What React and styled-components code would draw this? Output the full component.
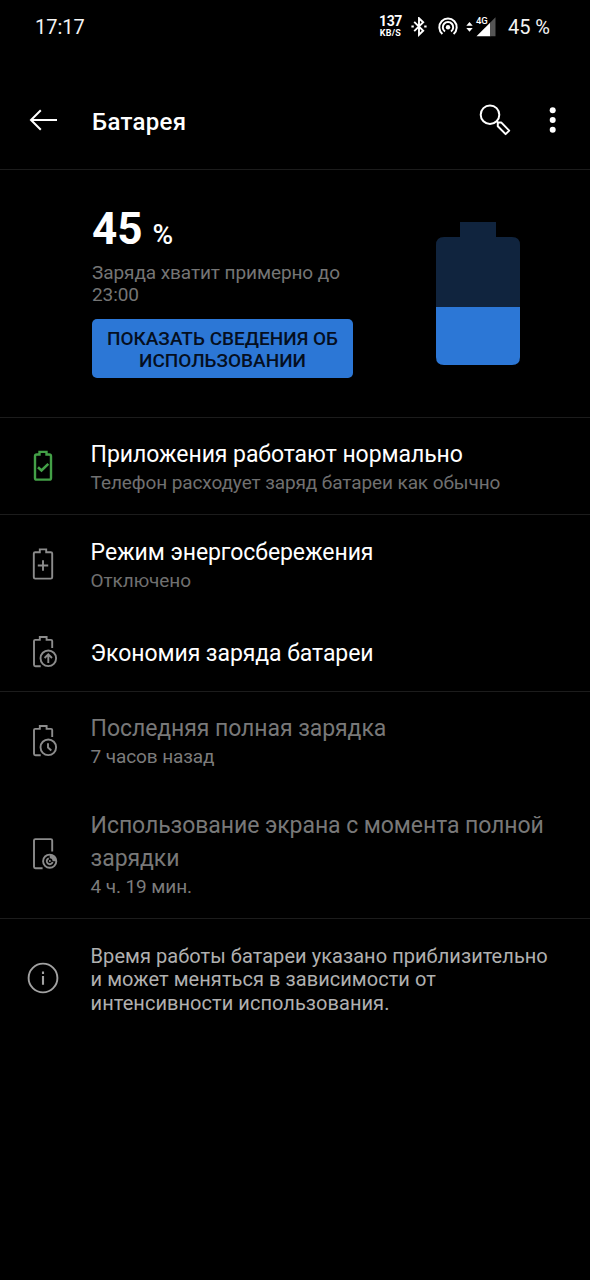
import React from "react";
import styled, { createGlobalStyle } from "styled-components";

const GlobalStyle = createGlobalStyle`
  * { box-sizing: border-box; }
  body { margin: 0; background: #000; font-family: Roboto, "Noto Sans", sans-serif; }
  svg { display: block; flex: none; }
`;

const Screen = styled.main`
  width: 590px;
  height: 1280px;
  background: #000;
  color: #fff;
  overflow: hidden;
`;

const StatusBar = styled.header`
  display: flex;
  align-items: center;
  height: 54px;
  padding: 0 40px 0 35px;
`;

const StatusText = styled.span`
  font-size: 20px;
  line-height: 24px;
  color: #f4f4f4;
  white-space: nowrap;
`;

const StatusIcons = styled.div`
  display: flex;
  align-items: center;
  margin-left: auto;
`;

const StatusGap = styled.div`
  margin-left: ${(p) => p.$size};
`;

const Speed = styled.div`
  width: 24px;
  margin-right: 9px;
  padding-bottom: 1px;
  text-align: center;
  font-weight: 700;
  white-space: nowrap;
`;

const SpeedValue = styled.div`
  font-size: 14px;
  line-height: 13px;
  letter-spacing: -0.5px;
`;

const SpeedUnit = styled.div`
  font-size: 9px;
  line-height: 10px;
  letter-spacing: 0.2px;
`;

const AppBar = styled.div`
  display: flex;
  align-items: center;
  height: 116px;
  padding: 17px 29px 0 29px;
  border-bottom: 1px solid #1c1c1c;
`;

const AppTitle = styled.h1`
  margin: 0 auto 0 34px;
  padding-top: 4px;
  font-size: 24px;
  line-height: 30px;
  font-weight: 500;
  letter-spacing: 0.3px;
`;

const IconButton = styled.button`
  display: flex;
  margin: 0 0 0 ${(p) => p.$gap || "0"};
  padding: 0;
  border: 0;
  background: none;
  color: #fff;
`;

const Summary = styled.section`
  display: flex;
  justify-content: space-between;
  height: 248px;
  padding: 0 70px 0 92px;
  border-bottom: 1px solid #1c1c1c;
`;

const SummaryInfo = styled.div`
  width: 262px;
  padding-top: 32px;
`;

const Percent = styled.div`
  display: flex;
  align-items: baseline;
  gap: 10px;
  height: 60px;
  font-size: 44px;
  line-height: 54px;
  font-weight: 700;
  white-space: nowrap;
`;

const PercentSign = styled.span`
  font-size: 28px;
  font-weight: 500;
`;

const Estimate = styled.p`
  margin: 0;
  font-size: 19px;
  line-height: 22px;
  letter-spacing: -0.08px;
  color: #757575;
  white-space: nowrap;
`;

const UsageButton = styled.button`
  display: block;
  width: 261px;
  height: 59px;
  margin-top: 13px;
  padding: 3px 0 0;
  border: 0;
  border-radius: 5px;
  background: #2c77d6;
  color: #050f1f;
  font: 500 19px/22px Roboto, sans-serif;
  text-align: center;
  white-space: nowrap;
`;

const BatteryWrap = styled.div`
  padding-top: 52px;
`;

const Section = styled.section`
  border-bottom: ${(p) => (p.$last ? "0" : "1px solid #1c1c1c")};
`;

const Row = styled.div`
  display: flex;
  align-items: center;
  height: ${(p) => p.$height};
  padding-left: 27px;
`;

const RowText = styled.div`
  margin-left: 31.6px;
  white-space: nowrap;
`;

const RowTitle = styled.div`
  margin-top: ${(p) => (p.$single ? "2px" : "-1px")};
  padding-bottom: ${(p) => (p.$single ? "0" : "1px")};
  font-size: 23px;
  line-height: 33px;
  letter-spacing: -0.07px;
  color: ${(p) => (p.$muted ? "#787878" : "#fff")};
`;

const RowCaption = styled.div`
  font-size: 19px;
  line-height: 22px;
  letter-spacing: -0.1px;
  color: ${(p) => (p.$muted ? "#7c7c7c" : "#707070")};
`;

const Note = styled.p`
  margin: 4px 0 0 31.6px;
  font-size: 20px;
  line-height: 23.3px;
  letter-spacing: 0.05px;
  color: #b0b0b0;
  white-space: nowrap;
`;

const RowIcon = ({ color = "#8c8c8c", children }) => (
  <svg width="32" height="32" viewBox="0 0 32 32" fill="none" stroke={color} strokeWidth="1.9">
    {children}
  </svg>
);

const OpenBattery = () => (
  <path d="M13.7 30.2H8.5Q7 30.2 7 28.7V5Q7 3.9 8.2 3.9H12.8V1H19.6V3.9H24Q25.2 3.9 25.2 5V12" />
);

const BatteryOk = () => (
  <RowIcon color="#43a047">
    <path strokeWidth="2.4" d="M12.5 1.9H19.5V4.5H22.3Q24 4.5 24 6.2V27.9Q24 29.6 22.3 29.6H9.7Q8 29.6 8 27.9V6.2Q8 4.5 9.7 4.5H12.5Z" />
    <path strokeWidth="2.6" d="M11 17.2L14.5 20.5L21.3 13.9" />
  </RowIcon>
);

const BatteryPlus = () => (
  <RowIcon>
    <path d="M12.8 1.4H19.2V4.2H23.8Q25.2 4.2 25.2 5.6V29.2Q25.2 30.6 23.8 30.6H8.2Q6.8 30.6 6.8 29.2V5.6Q6.8 4.2 8.2 4.2H12.8Z" />
    <path d="M16 12.3V22.7M10.8 17.5H21.2" />
  </RowIcon>
);

const BatteryUp = () => (
  <RowIcon>
    <OpenBattery />
    <circle cx="21.3" cy="22.3" r="7.8" />
    <path d="M21.3 27V18.5M17.6 22L21.3 18.3L25 22" />
  </RowIcon>
);

const BatteryClock = () => (
  <RowIcon>
    <OpenBattery />
    <circle cx="21.3" cy="22.3" r="7.8" />
    <path d="M21 18.3V22.5L24.3 25.5" />
  </RowIcon>
);

const ScreenUsage = () => (
  <RowIcon>
    <path d="M15.6 30.2H8.4Q7 30.2 7 28.8V2.5Q7 1.1 8.4 1.1H23.8Q25.2 1.1 25.2 2.5V13.4" />
    <circle cx="22.7" cy="23.2" r="6.6" />
    <path d="M21.8 20.3A3 3 0 1 0 25.6 24" />
    <path fill="#8c8c8c" stroke="none" d="M22.7 16.5A6.7 6.7 0 0 1 29.4 23.2H25.6A2.9 2.9 0 0 0 22.7 20.3Z" />
    <circle cx="22.9" cy="23" r="1" fill="#8c8c8c" stroke="none" />
  </RowIcon>
);

const InfoIcon = () => (
  <RowIcon color="#a2a2a2">
    <circle cx="16" cy="16" r="14.4" />
    <path strokeWidth="2.1" d="M16 14V22.8M16 9.5V12" />
  </RowIcon>
);

const BatteryLevel = () => (
  <svg width="84" height="143" viewBox="0 0 84 143">
    <path fill="#10243e" d="M24 0H60V15H76Q84 15 84 23V85H0V23Q0 15 8 15H24Z" />
    <path fill="#2c77d6" d="M0 85H84V135Q84 143 76 143H8Q0 143 0 135Z" />
  </svg>
);

const BluetoothIcon = () => (
  <svg width="16" height="20" viewBox="0 0 16 20" fill="none" stroke="#fff" strokeWidth="1.9">
    <path d="M3.2 4.8L12.2 13.8L8 17.8V1.2L12.2 5.2L3.2 14.2" />
    <path strokeWidth="2.2" d="M.4 9.5H2.8M13.2 9.5H15.6" />
  </svg>
);

const HotspotIcon = () => (
  <svg width="20" height="20" viewBox="0 0 20 20" fill="none" stroke="#fff" strokeWidth="2">
    <circle cx="10" cy="10.2" r="2.2" fill="#fff" stroke="none" />
    <path d="M4.4 16.9A8.7 8.7 0 1 1 15.6 16.9" />
    <path d="M7 14.5A5.2 5.2 0 1 1 13 14.5" />
  </svg>
);

const SignalIcon = () => (
  <svg width="30" height="24" viewBox="0 -2 30 24">
    <path fill="#fff" d="M.3 8.8L3.5 5L6.7 8.8ZM.3 11L3.5 14.8L6.7 11Z" />
    <path fill="#fff" d="M10.5 19.2L24.3 5.4V19.2Z" />
    <path fill="#555" d="M24.3 5.4L29.5 .3V19.2H24.3Z" />
    <text x="9.9" y="7" fill="#fff" stroke="#000" strokeWidth="1.5" paintOrder="stroke" fontSize="9.5" fontWeight="500" fontFamily="Roboto, sans-serif">4G</text>
  </svg>
);

const Item = ({ icon, title, caption, height, muted }) => (
  <Row $height={height}>
    {icon}
    <RowText>
      <RowTitle $muted={muted} $single={!caption}>{title}</RowTitle>
      {caption && <RowCaption $muted={muted}>{caption}</RowCaption>}
    </RowText>
  </Row>
);

export default function App() {
  return (
    <Screen>
      <GlobalStyle />
      <StatusBar>
        <StatusText>17:17</StatusText>
        <StatusIcons>
          <Speed>
            <SpeedValue>137</SpeedValue>
            <SpeedUnit>KB/S</SpeedUnit>
          </Speed>
          <BluetoothIcon />
          <StatusGap $size="10.5px"><HotspotIcon /></StatusGap>
          <StatusGap $size="8.5px"><SignalIcon /></StatusGap>
          <StatusGap $size="11.5px"><StatusText>45 %</StatusText></StatusGap>
        </StatusIcons>
      </StatusBar>

      <AppBar>
        <IconButton aria-label="Назад">
          <svg width="29" height="24" viewBox="0 0 29 24" fill="none" stroke="#fff" strokeWidth="2">
            <path d="M28 12H2M11.8 2.2L2 12L11.8 21.8" />
          </svg>
        </IconButton>
        <AppTitle>Батарея</AppTitle>
        <IconButton aria-label="Поиск">
          <svg width="32" height="32" viewBox="0 0 32 32" fill="none" stroke="#fff" strokeWidth="2">
            <circle cx="11" cy="10.7" r="9.3" />
            <path strokeLinejoin="round" d="M17.4 17.1L19.2 18.6H22.4L30.2 26.6L26.6 30.1L18.8 22.3V18.6" />
          </svg>
        </IconButton>
        <IconButton $gap="34px" aria-label="Меню">
          <svg width="16" height="28" viewBox="0 0 16 28" fill="#fff">
            <circle cx="7.7" cy="4.3" r="3" />
            <circle cx="7.7" cy="14" r="3" />
            <circle cx="7.7" cy="23.7" r="3" />
          </svg>
        </IconButton>
      </AppBar>

      <Summary>
        <SummaryInfo>
          <Percent>45 <PercentSign>%</PercentSign></Percent>
          <Estimate>Заряда хватит примерно до<br />23:00</Estimate>
          <UsageButton>ПОКАЗАТЬ СВЕДЕНИЯ ОБ<br />ИСПОЛЬЗОВАНИИ</UsageButton>
        </SummaryInfo>
        <BatteryWrap><BatteryLevel /></BatteryWrap>
      </Summary>

      <Section>
        <Item icon={<BatteryOk />} height="96px" title="Приложения работают нормально" caption="Телефон расходует заряд батареи как обычно" />
      </Section>
      <Section>
        <Item icon={<BatteryPlus />} height="98px" title="Режим энергосбережения" caption="Отключено" />
        <Item icon={<BatteryUp />} height="78px" title="Экономия заряда батареи" />
      </Section>
      <Section>
        <Item icon={<BatteryClock />} height="97px" muted title="Последняя полная зарядка" caption="7 часов назад" />
        <Item
          icon={<ScreenUsage />}
          height="129px"
          muted
          title={<>Использование экрана с момента полной<br />зарядки</>}
          caption="4 ч. 19 мин."
        />
      </Section>
      <Section $last>
        <Row $height="118px">
          <InfoIcon />
          <Note>Время работы батареи указано приблизительно<br />и может меняться в зависимости от<br />интенсивности использования.</Note>
        </Row>
      </Section>
    </Screen>
  );
}
